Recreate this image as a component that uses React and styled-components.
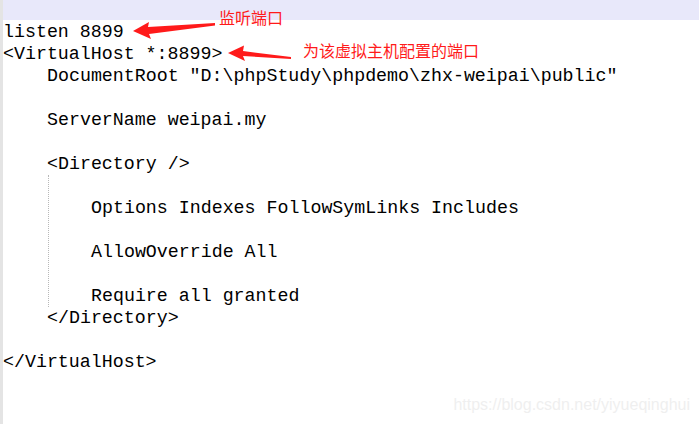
import React from 'react';
import styled, { createGlobalStyle } from 'styled-components';

const GlobalStyle = createGlobalStyle`
  html, body {
    margin: 0;
    padding: 0;
    background: #fff;
  }
`;

const Page = styled.div`
  position: relative;
  display: flex;
  width: 699px;
  height: 424px;
  overflow: hidden;
  background: #fff;
`;

const Gutter = styled.div`
  width: 3px;
  flex-shrink: 0;
  background: #e4e4e4;
`;

const Editor = styled.div`
  flex: 1;
  display: flex;
  flex-direction: column;
`;

const ActiveLine = styled.div`
  height: 20px;
  background: #e8e8fa;
`;

const Code = styled.div`
  padding-top: 1px;
  font-family: "Liberation Mono", "Courier New", monospace;
  font-size: 18.3px;
  line-height: 22px;
  color: #000;
  white-space: pre;
`;

const Line = styled.div`
  height: 22px;
  padding-left: ${(p) => (p.indent || 0) * 11}px;
`;

const Block = styled.div`
  margin-left: 45px;
  border-left: 1px dotted #b8b8b8;
  padding-left: 42px;
`;

const Label = styled.span`
  position: absolute;
  font-family: "Liberation Sans", "Noto Sans CJK SC", sans-serif;
  font-size: 16px;
  line-height: 18px;
  color: #ff1a1a;
  white-space: nowrap;
`;

const Arrows = styled.svg`
  position: absolute;
  left: 0;
  top: 0;
  pointer-events: none;
`;

const Watermark = styled.span`
  position: absolute;
  right: 9px;
  bottom: 10px;
  font-family: "Liberation Sans", Arial, sans-serif;
  font-size: 16px;
  line-height: 18px;
  color: #efefef;
`;

export default function App() {
  return (
    <Page>
      <GlobalStyle />
      <Gutter />
      <Editor>
        <ActiveLine />
        <Code>
          <Line>listen 8899</Line>
          <Line>{'<VirtualHost *:8899>'}</Line>
          <Line indent={4}>{'DocumentRoot "D:\\phpStudy\\phpdemo\\zhx-weipai\\public"'}</Line>
          <Line />
          <Line indent={4}>ServerName weipai.my</Line>
          <Line />
          <Line indent={4}>{'<Directory />'}</Line>
          <Block>
            <Line />
            <Line>Options Indexes FollowSymLinks Includes</Line>
            <Line />
            <Line>AllowOverride All</Line>
            <Line />
            <Line>Require all granted</Line>
          </Block>
          <Line indent={4}>{'</Directory>'}</Line>
          <Line />
          <Line>{'</VirtualHost>'}</Line>
        </Code>
      </Editor>

      <Arrows width="699" height="424" viewBox="0 0 699 424">
        <path d="M133 31 L149 22 L148 27 L215 23 L215 25.5 L149 34 L151 39 Z" fill="#ff1a1a" />
        <path d="M228 53 L244 45.5 L243 51 L291 57 L291 59 L243 56 L245 61 Z" fill="#ff1a1a" />
      </Arrows>
      <Label style={{ left: 219, top: 10 }}>监听端口</Label>
      <Label style={{ left: 303, top: 43 }}>为该虚拟主机配置的端口</Label>
      <Watermark>https://blog.csdn.net/yiyueqinghui</Watermark>
    </Page>
  );
}
